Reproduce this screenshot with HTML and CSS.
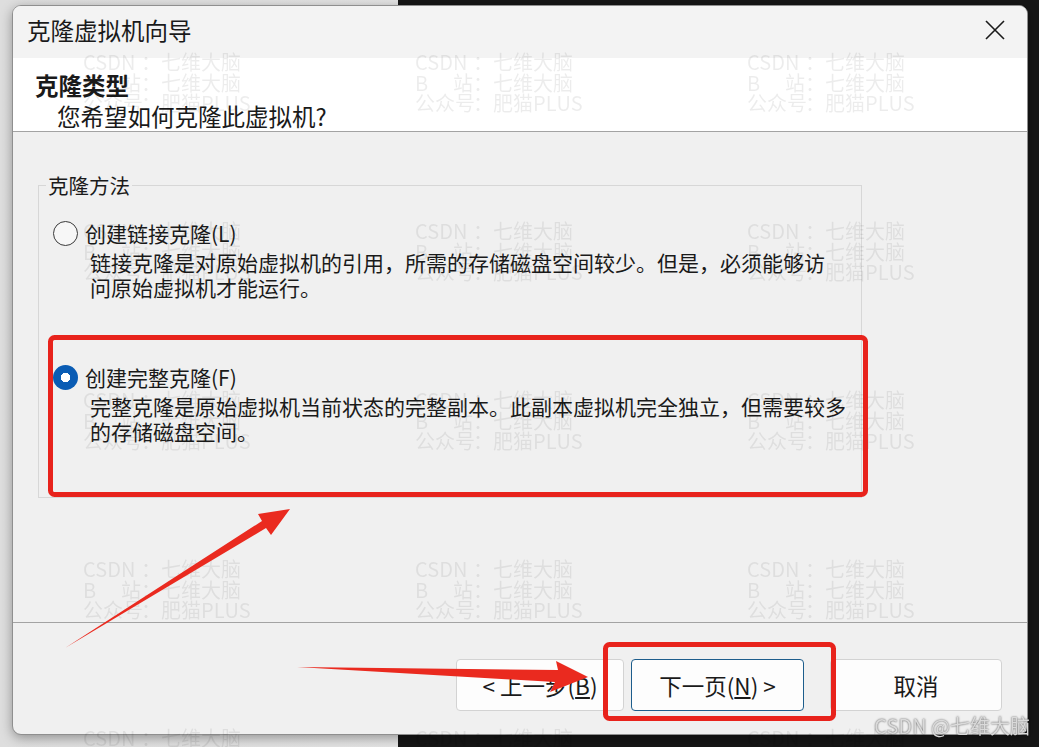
FILE: index.html
```html
<!DOCTYPE html>
<html lang="zh-CN">
<head>
  <meta charset="UTF-8" />
  <meta name="viewport" content="width=device-width, initial-scale=1" />
  <title>克隆虚拟机向导</title>
  <link rel="stylesheet" href="styles.css">
</head>
<body>
  <div class="dialog">
    <div class="titlebar">
      <div class="title">克隆虚拟机向导</div>
      <svg class="close" width="20" height="20" viewBox="0 0 20 20">
        <path d="M1 1 L19 19 M19 1 L1 19" stroke="#1a1a1a" stroke-width="1.6" fill="none" />
      </svg>
    </div>

    <div class="header">
      <div class="header-title">克隆类型</div>
      <div class="header-sub">您希望如何克隆此虚拟机?</div>
    </div>

    <div class="content">
      <fieldset class="group">
        <legend>克隆方法</legend>

        <div class="option">
          <label class="option-row">
            <input type="radio" name="clone" class="radio" />
            <span>创建链接克隆(L)</span>
          </label>
          <div class="option-desc">链接克隆是对原始虚拟机的引用，所需的存储磁盘空间较少。但是，必须能够访<br>问原始虚拟机才能运行。</div>
        </div>

        <div class="option option-full">
          <label class="option-row">
            <input type="radio" name="clone" class="radio" checked />
            <span>创建完整克隆(F)</span>
          </label>
          <div class="option-desc">完整克隆是原始虚拟机当前状态的完整副本。此副本虚拟机完全独立，但需要较多<br>的存储磁盘空间。</div>
        </div>
      </fieldset>
    </div>

    <div class="footer">
      <button class="btn btn-back">&lt; 上一步(<u>B</u>)</button>
      <button class="btn btn-next">下一页(<u>N</u>) &gt;</button>
      <button class="btn btn-cancel">取消</button>
    </div>
  </div>

  <!-- watermark tiles -->
  <div class="watermarks">
    <div class="wm"><div><span class="wm-key">CSDN</span>：七维大脑</div><div><span class="wm-key">B 站</span>：七维大脑</div><div><span class="wm-key">公众号</span>：肥猫PLUS</div></div>
    <div class="wm"><div><span class="wm-key">CSDN</span>：七维大脑</div><div><span class="wm-key">B 站</span>：七维大脑</div><div><span class="wm-key">公众号</span>：肥猫PLUS</div></div>
    <div class="wm"><div><span class="wm-key">CSDN</span>：七维大脑</div><div><span class="wm-key">B 站</span>：七维大脑</div><div><span class="wm-key">公众号</span>：肥猫PLUS</div></div>
    <div class="wm"><div><span class="wm-key">CSDN</span>：七维大脑</div><div><span class="wm-key">B 站</span>：七维大脑</div><div><span class="wm-key">公众号</span>：肥猫PLUS</div></div>
    <div class="wm"><div><span class="wm-key">CSDN</span>：七维大脑</div><div><span class="wm-key">B 站</span>：七维大脑</div><div><span class="wm-key">公众号</span>：肥猫PLUS</div></div>
    <div class="wm"><div><span class="wm-key">CSDN</span>：七维大脑</div><div><span class="wm-key">B 站</span>：七维大脑</div><div><span class="wm-key">公众号</span>：肥猫PLUS</div></div>
    <div class="wm"><div><span class="wm-key">CSDN</span>：七维大脑</div><div><span class="wm-key">B 站</span>：七维大脑</div><div><span class="wm-key">公众号</span>：肥猫PLUS</div></div>
    <div class="wm"><div><span class="wm-key">CSDN</span>：七维大脑</div><div><span class="wm-key">B 站</span>：七维大脑</div><div><span class="wm-key">公众号</span>：肥猫PLUS</div></div>
    <div class="wm"><div><span class="wm-key">CSDN</span>：七维大脑</div><div><span class="wm-key">B 站</span>：七维大脑</div><div><span class="wm-key">公众号</span>：肥猫PLUS</div></div>
    <div class="wm"><div><span class="wm-key">CSDN</span>：七维大脑</div><div><span class="wm-key">B 站</span>：七维大脑</div><div><span class="wm-key">公众号</span>：肥猫PLUS</div></div>
    <div class="wm"><div><span class="wm-key">CSDN</span>：七维大脑</div><div><span class="wm-key">B 站</span>：七维大脑</div><div><span class="wm-key">公众号</span>：肥猫PLUS</div></div>
    <div class="wm"><div><span class="wm-key">CSDN</span>：七维大脑</div><div><span class="wm-key">B 站</span>：七维大脑</div><div><span class="wm-key">公众号</span>：肥猫PLUS</div></div>
    <div class="wm"><div><span class="wm-key">CSDN</span>：七维大脑</div></div>
    <div class="wm"><div><span class="wm-key">CSDN</span>：七维大脑</div></div>
    <div class="wm"><div><span class="wm-key">CSDN</span>：七维大脑</div></div>
  </div>

  <!-- red annotations drawn over the screenshot -->
  <svg class="annotations" width="1039" height="747" viewBox="0 0 1039 747">
    <rect x="50.5" y="337.5" width="815" height="157" rx="4" fill="none" stroke="#e8231c" stroke-width="5" />
    <rect x="605.5" y="644.5" width="228" height="74" rx="4" fill="none" stroke="#e8231c" stroke-width="5" />
    <polygon points="65,648 262,521 258,514 290,509 271,535 266,528" fill="#ea2a1f" />
    <polygon points="297,667 558,670 556,661 588,677 550,692 555,682" fill="#ea2a1f" />
  </svg>

  <div class="credit">CSDN @七维大脑</div>
</body>
</html>
```

FILE: styles.css
```css
body {
  margin: 0;
  width: 1039px;
  height: 747px;
  overflow: hidden;
  box-sizing: border-box;
  padding: 5px 0 0 12px;
  background: linear-gradient(to right, #dedede 0, #e4e4e4 398px, #161616 398px);
  font-family: "Noto Sans CJK SC", "Noto Sans", sans-serif;
  color: #1a1a1a;
}
.dialog {
  width: 1016px;
  height: 730px;
  box-sizing: border-box;
  border: 1px solid #8f8f8f;
  border-radius: 9px;
  overflow: hidden;
  background: #f0f0f0;
  display: flex;
  flex-direction: column;
  box-shadow: 0 3px 12px rgba(0,0,0,0.35);
}
.titlebar {
  height: 52px;
  flex: none;
  background: #f3f3f3;
  display: flex;
  align-items: center;
  justify-content: space-between;
  padding: 0 22px 4px 14px;
  box-sizing: border-box;
}
.title {
  font-size: 23.5px;
  line-height: 28px;
}
.header {
  height: 74px;
  flex: none;
  box-sizing: border-box;
  background: #fff;
  border-bottom: 1px solid #a3a3a3;
  padding: 13px 0 0 22px;
}
.header-title {
  font-size: 23.5px;
  font-weight: 700;
  line-height: 28px;
}
.header-sub {
  font-size: 23.5px;
  line-height: 28px;
  margin-top: 3px;
  padding-left: 22px;
}
.content {
  flex: 1;
  padding-left: 25px;
}
.group {
  margin: 42px 0 0 0;
  width: 824px;
  height: 324px;
  box-sizing: border-box;
  border: 1px solid #d7d7d7;
  padding: 23px 0 0 7px;
}
.group legend {
  font-size: 20.5px;
  line-height: 22px;
  padding: 0 2px;
}
.option-row {
  display: flex;
  align-items: center;
  gap: 7px;
  height: 28px;
  margin-left: 7px;
  font-size: 21px;
}
.option-full {
  margin-top: 63px;
}
.radio {
  appearance: none;
  margin: 0;
  width: 25px;
  height: 25px;
  border-radius: 50%;
  border: 1.5px solid #3a3a3a;
  box-sizing: border-box;
  background: #f7f7f7;
}
.radio:checked {
  border: none;
  background: radial-gradient(circle, #fff 0 4.5px, #0a5cb4 5px);
}
.option-desc {
  margin: 3px 0 0 44px;
  font-size: 21px;
  line-height: 25px;
}
.footer {
  height: 112px;
  flex: none;
  box-sizing: border-box;
  border-top: 1px solid #a3a3a3;
  display: flex;
  justify-content: flex-end;
  align-items: flex-start;
  padding: 36px 25px 0 0;
}
.btn {
  height: 52px;
  background: #fdfdfd;
  border: 1px solid #d3d3d3;
  border-radius: 4px;
  font-family: inherit;
  font-size: 22.5px;
  color: #1a1a1a;
  padding: 0;
}
.btn-back {
  width: 168px;
}
.btn-next {
  width: 173px;
  margin-left: 7px;
  border-color: #1d5d8c;
}
.btn-cancel {
  width: 172px;
  margin-left: 26px;
}
.watermarks {
  position: fixed;
  inset: 0;
  display: grid;
  grid-template-columns: repeat(3, 332px);
  grid-auto-rows: 169px;
  padding: 52px 0 0 83px;
  pointer-events: none;
  color: rgba(0,0,0,0.075);
  font-size: 20px;
  line-height: 20.5px;
  white-space: nowrap;
}
.wm-key {
  display: inline-block;
  width: 58px;
  text-align-last: justify;
}
.annotations {
  position: fixed;
  left: 0;
  top: 0;
  pointer-events: none;
}
.credit {
  position: fixed;
  right: 9px;
  bottom: 7px;
  font-size: 20px;
  color: #dadada;
  text-shadow: 0 0 2px rgba(0,0,0,0.7);
}
```
